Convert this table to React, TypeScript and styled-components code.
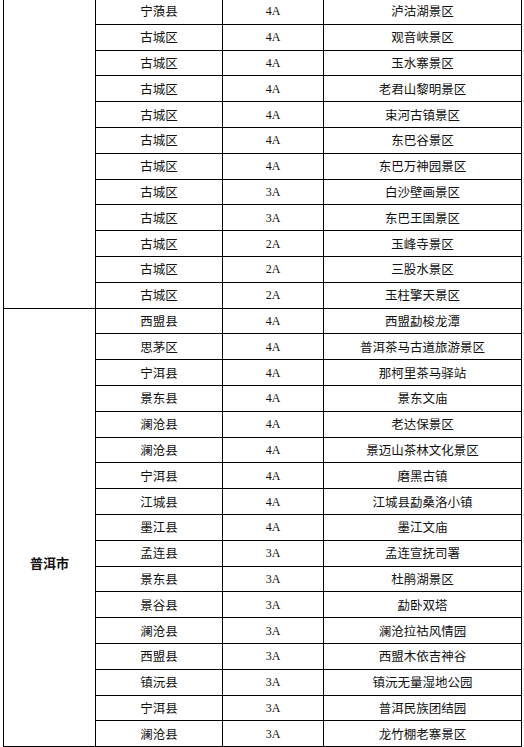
import styled, { createGlobalStyle } from "styled-components";

const GlobalStyle = createGlobalStyle`
  html, body {
    margin: 0;
    padding: 0;
    background: #ffffff;
  }
  body {
    overflow: hidden;
  }
`;

const Page = styled.div`
  padding-left: 3px;
  margin-top: -2px;
`;

const Table = styled.table`
  border-collapse: collapse;
  table-layout: fixed;
  width: 518px;
  font-family: "Liberation Serif", "Noto Sans CJK SC", serif;
  font-size: 12.5px;
  color: #111;
`;

const Col = styled.col<{ $w: number }>`
  width: ${(p) => p.$w}px;
`;

const Row = styled.tr`
  height: 25.8px;
`;

const Cell = styled.td<{ $bold?: boolean }>`
  border: 1px solid #000;
  padding: 0;
  text-align: center;
  vertical-align: middle;
  line-height: 16px;
  white-space: nowrap;
  font-family: "Noto Sans CJK SC", sans-serif;
  font-weight: ${(p) => (p.$bold ? 700 : 400)};
`;

const Level = styled(Cell)`
  font-family: "Liberation Serif", "DejaVu Serif", serif;
  font-size: 12px;
`;

const City = styled(Cell)<{ $offset: number }>`
  vertical-align: top;
  padding-top: ${(p) => p.$offset}px;
  font-size: 13px;
`;

type Spot = [string, string, string];

const lijiang: Spot[] = [
  ["宁蒗县", "4A", "泸沽湖景区"],
  ["古城区", "4A", "观音峡景区"],
  ["古城区", "4A", "玉水寨景区"],
  ["古城区", "4A", "老君山黎明景区"],
  ["古城区", "4A", "束河古镇景区"],
  ["古城区", "4A", "东巴谷景区"],
  ["古城区", "4A", "东巴万神园景区"],
  ["古城区", "3A", "白沙壁画景区"],
  ["古城区", "3A", "东巴王国景区"],
  ["古城区", "2A", "玉峰寺景区"],
  ["古城区", "2A", "三股水景区"],
  ["古城区", "2A", "玉柱擎天景区"],
];

const puer: Spot[] = [
  ["西盟县", "4A", "西盟勐梭龙潭"],
  ["思茅区", "4A", "普洱茶马古道旅游景区"],
  ["宁洱县", "4A", "那柯里茶马驿站"],
  ["景东县", "4A", "景东文庙"],
  ["澜沧县", "4A", "老达保景区"],
  ["澜沧县", "4A", "景迈山茶林文化景区"],
  ["宁洱县", "4A", "磨黑古镇"],
  ["江城县", "4A", "江城县勐桑洛小镇"],
  ["墨江县", "4A", "墨江文庙"],
  ["孟连县", "3A", "孟连宣抚司署"],
  ["景东县", "3A", "杜鹃湖景区"],
  ["景谷县", "3A", "勐卧双塔"],
  ["澜沧县", "3A", "澜沧拉祜风情园"],
  ["西盟县", "3A", "西盟木依吉神谷"],
  ["镇沅县", "3A", "镇沅无量湿地公园"],
  ["宁洱县", "3A", "普洱民族团结园"],
  ["澜沧县", "3A", "龙竹棚老寨景区"],
];

function Group({ city, rows, offset }: { city: string; rows: Spot[]; offset: number }) {
  return (
    <>
      {rows.map(([county, level, name], i) => (
        <Row key={i}>
          {i === 0 && (
            <City rowSpan={rows.length} $bold $offset={offset}>
              {city}
            </City>
          )}
          <Cell>{county}</Cell>
          <Level>{level}</Level>
          <Cell>{name}</Cell>
        </Row>
      ))}
    </>
  );
}

export default function App() {
  return (
    <Page>
      <GlobalStyle />
      <Table>
        <colgroup>
          <Col $w={92} />
          <Col $w={127} />
          <Col $w={101} />
          <Col $w={198} />
        </colgroup>
        <tbody>
          <Group city="" rows={lijiang} offset={0} />
          <Group city="普洱市" rows={puer} offset={246} />
        </tbody>
      </Table>
    </Page>
  );
}
